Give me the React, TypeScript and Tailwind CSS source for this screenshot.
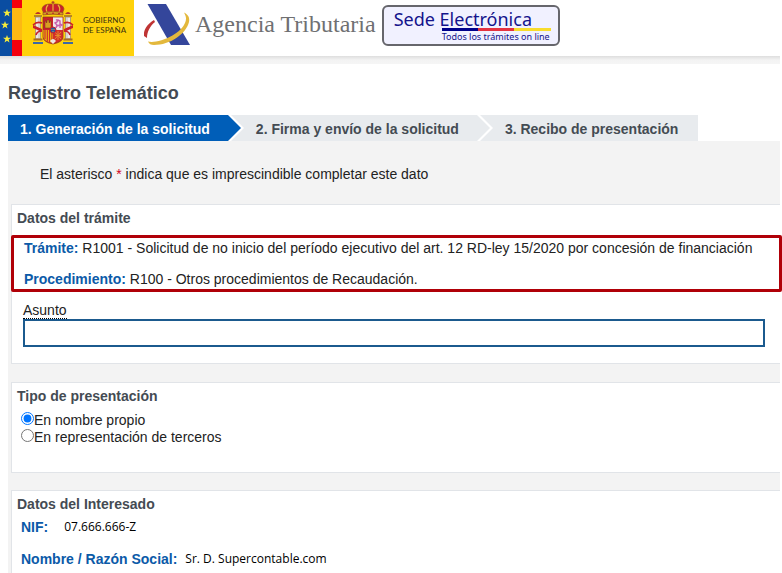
import { useState } from "react";
import type { ReactNode } from "react";

const STEPS = ["1. Generación de la solicitud", "2. Firma y envío de la solicitud", "3. Recibo de presentación"];

const PRESENTATION_TYPES = [
  { id: "propio", label: "En nombre propio" },
  { id: "terceros", label: "En representación de terceros" }
];

function Star({ x, y }: { x: number; y: number }) {
  return (
    <polygon
      transform={`translate(${x} ${y})`}
      points="0,-4 1,-1.2 4,-1.2 1.6,0.6 2.5,3.6 0,1.8 -2.5,3.6 -1.6,0.6 -4,-1.2 -1,-1.2"
      fill="#f7ec3c"
    />
  );
}

function Flags() {
  return (
    <svg width="22" height="56" viewBox="0 0 22 56" aria-hidden="true">
      <rect width="12" height="56" fill="#0a4da2" />
      <rect x="12" width="10" height="56" fill="#f4000d" />
      <rect x="12" y="8" width="10" height="32" fill="#fdb813" />
      <Star x={7} y={13} />
      <Star x={5} y={25} />
      <Star x={7} y={39} />
    </svg>
  );
}

function CoatOfArms() {
  return (
    <svg width="42" height="46" viewBox="0 0 42 46" aria-label="Escudo de España" role="img">
      {/* crown */}
      <path d="M21 1v3M19.5 2.3h3" stroke="#a8352a" strokeWidth="1" />
      <path d="M10 9C11 4 16 4 21 4s10 0 11 5l-2 5H12z" fill="#c9202c" stroke="#9a5a18" strokeWidth=".8" />
      <path d="M21 4v8M16 5c-2 2-2 5-1 7M26 5c2 2 2 5 1 7" stroke="#e9b53a" strokeWidth="1.2" fill="none" />
      <path d="M11 12.500q10-2.500 20 0v2.500q-10-2-20 0z" fill="#d79b28" stroke="#8a3d1b" strokeWidth=".6" />
      <path d="M14 13.7h2M20 13.2h2M26 13.7h2" stroke="#b3202a" />
      {/* pillars */}
      <path d="M3.500 17h5v22h-5zM33.500 17h5v22h-5z" fill="#d9d3cc" stroke="#8d7b76" strokeWidth=".6" />
      <path d="M5 18v20M37 18v20" stroke="#fff" strokeWidth="1" />
      <path d="M2 16h8M32 16h8" stroke="#b68426" strokeWidth="2" />
      <path d="M3 14q3-4 6 0zM33 14q3-4 6 0z" fill="#b9302b" />
      <path d="M1.5 39.5h9M31.5 39.5h9" stroke="#a86c23" strokeWidth="2" />
      <path d="M1 43h10M31 43h10" stroke="#3d69a5" strokeWidth="2" />
      <path d="M1 25l9 4v3l-9-4zM41 25l-9 4v3l9-4z" fill="#c9202c" />
      <path d="M1 25q4-4 9-2M41 25q-4-4-9-2M10 31q-5 0-6 4M32 31q5 0 6 4" stroke="#c9202c" strokeWidth="1.6" fill="none" />
      {/* shield */}
      <path d="M11 17h20v20q0 5-10 7Q11 42 11 37z" fill="#c9202c" stroke="#8a3d1b" strokeWidth=".8" />
      <path d="M21 17.4h9.6V30H21z" fill="#efe6e9" />
      <path d="M13 21v7h6v-7h-1v1.500h-1V20h-2v2.500h-1V21z" fill="#d99e22" stroke="#71351a" strokeWidth=".5" />
      <path d="M24 28l1-3-2-2 2-1 1-2 2 1v3l2 1-2 1v2M24 19.5l2 1.5M28 25l-3 1" stroke="#c95fae" strokeWidth="1.4" fill="none" />
      <path d="M11.4 30H21v13q-9-1.500-9.600-6z" fill="#eeb211" />
      <path d="M13 30v9M15.3 30v11.5M17.6 30v12.5M19.9 30v13" stroke="#c9202c" strokeWidth="1" />
      <path d="M21 30h9.600v7q-.6 4-9.600 6z" fill="#d2302c" />
      <path d="M23 32l6 7M29 32l-6 7M26 31v9M23 35.5h6" stroke="#e6902c" strokeWidth=".9" />
      <path d="M18 41q3-4 6 0l-3 3z" fill="#efe6e0" />
      <circle cx="21" cy="30" r="3" fill="#2858a5" stroke="#c9202c" />
      <path d="M20 29v1M22 29v1M21 31v1" stroke="#efbf28" strokeWidth=".8" />
    </svg>
  );
}

function AgencyMark() {
  return (
    <svg width="48" height="44" viewBox="0 0 48 44" aria-hidden="true">
      <path d="M3.500 2H22l24 41H27z" fill="#34469b" />
      <path d="M10 18C3 22 -1 29 0 34l3 2C3 30 6 24 11 20z" fill="#bf3434" />
      <path
        d="M40 10.500c4 2 6 5 5 9.500-3 12-19 23-35 23-3 0-5-1-6-3.500 2 .5 5 .5 8 0 15-2.500 30-13 30-23 0-2-1-4-2-6z"
        fill="#e3b83c"
      />
    </svg>
  );
}

function SedeElectronica() {
  return (
    <a
      href="#sede"
      className="mt-[5px] ml-1.5 flex h-[41px] w-[178px] flex-col rounded-md border-2 border-[#66666c] bg-[#f1f1ff] pl-2.5 font-['Noto_Sans','Open_Sans',sans-serif] text-[#14148c]"
    >
      <span className="h-[21px] text-lg leading-6 whitespace-nowrap">Sede Electrónica</span>
      <span className="ml-12 flex h-[3px] w-[109px] shrink-0">
        <span className="flex-1 bg-[#00008b]" />
        <span className="flex-1 bg-[#e53340]" />
        <span className="flex-1 bg-[#f8dc2c]" />
      </span>
      <span className="ml-12 text-[9px] leading-3 whitespace-nowrap">Todos los trámites on line</span>
    </a>
  );
}

function Header() {
  return (
    <header className="flex h-14 shrink-0 bg-white">
      <div className="flex h-14 w-[134px] bg-[#ffd20a]">
        <Flags />
        <span className="ml-2.5">
          <CoatOfArms />
        </span>
        <span className="mt-[15px] ml-[9px] font-['Lato',sans-serif] text-[8px] leading-[10px] text-[#3a3310]">
          <span className="block">GOBIERNO</span>
          <span className="block">DE ESPAÑA</span>
        </span>
      </div>
      <span className="mt-0.5 ml-2.5">
        <AgencyMark />
      </span>
      <span className="mt-2 ml-[3px] font-['Liberation_Serif',serif] text-[24px] leading-8 whitespace-nowrap text-[#6f7072]">
        Agencia Tributaria
      </span>
      <SedeElectronica />
    </header>
  );
}

function Steps() {
  return (
    <ol className="flex h-[26px] text-sm leading-[28px] font-bold whitespace-nowrap">
      {STEPS.map((step, index) => (
        <li
          key={step}
          aria-current={index === 0 ? "step" : undefined}
          className={`flex pl-3 ${index === 0 ? "bg-[#005eb8] text-white" : "bg-[#e8ebee] text-[#444b53]"}`}
        >
          {step}
          {index < STEPS.length - 1 ? (
            <svg width="34" height="26" viewBox="0 0 34 26" className="shrink-0" aria-hidden="true">
              <rect x="18" width="16" height="26" fill="#e8ebee" />
              <path d="M18 0h3l13 13-13 13h-3z" fill="#fff" />
              <path d="M0 0h18l13 13-13 13H0z" fill={index === 0 ? "#005eb8" : "#e8ebee"} />
            </svg>
          ) : (
            <span className="w-5" />
          )}
        </li>
      ))}
    </ol>
  );
}

function Panel({ title, className, children }: { title: string; className: string; children: ReactNode }) {
  return (
    <section className={`border-y border-l border-[#e1e4e8] bg-white ${className}`}>
      <h2 className="pt-[3px] pl-[5px] text-sm leading-5 font-bold text-[#444b53]">{title}</h2>
      {children}
    </section>
  );
}

export default function App() {
  const [subject, setSubject] = useState("");
  const [presentation, setPresentation] = useState("propio");

  return (
    <div className="flex min-h-screen flex-col overflow-x-hidden bg-white font-['Liberation_Sans',Arial,sans-serif] text-sm text-[#222]">
      <Header />
      <div className="mr-0.5 h-2 shrink-0 bg-linear-to-b from-[#dedede] via-[#f3f3f3] to-[#f5f5f5]" />

      <main className="mr-0.5 ml-2 flex flex-1 flex-col">
        <h1 className="mt-[17px] mb-2.5 text-lg leading-6 font-bold text-[#444b53]">Registro Telemático</h1>
        <Steps />

        <div className="flex flex-1 flex-col bg-[#f3f3f3] pl-[3px]">
          <p className="pt-[23px] pb-5 pl-[29px] leading-5">
            El asterisco <span className="text-[#d0021b]">*</span> indica que es imprescindible completar este dato
          </p>

          <Panel title="Datos del trámite" className="pb-4">
            <div className="mt-[7px] -mr-0.5 -ml-px rounded-xs border-3 border-[#b00008] pl-2.5">
              <p className="leading-5 whitespace-nowrap">
                <strong className="text-[#0b5aa8]">Trámite:</strong> R1001 - Solicitud de no inicio del período
                ejecutivo del art. 12 RD-ley 15/2020 por concesión de financiación
              </p>
              <p className="mt-[11px] leading-5">
                <strong className="text-[#0b5aa8]">Procedimiento:</strong> R100 - Otros procedimientos de Recaudación.
              </p>
            </div>
            <div className="mt-2.5 mr-[15px] ml-[11px]">
              <label htmlFor="asunto" className="block h-[17px] leading-4">
                <span className="border-b border-dotted border-black">Asunto</span>
              </label>
              <input
                id="asunto"
                type="text"
                value={subject}
                onChange={(event) => setSubject(event.target.value)}
                className="block h-7 w-full border-2 border-[#1b5a8e] bg-white px-2 outline-none"
              />
            </div>
          </Panel>

          <Panel title="Tipo de presentación" className="mt-[18px] pb-[26px]">
            <div role="radiogroup" aria-label="Tipo de presentación" className="mt-1.5 pl-[9px]">
              {PRESENTATION_TYPES.map((type) => (
                <label key={type.id} className="flex h-[17px] leading-[17px]">
                  <input
                    type="radio"
                    name="presentacion"
                    checked={presentation === type.id}
                    onChange={() => setPresentation(type.id)}
                    className="size-[13px] accent-[#0075ff]"
                  />
                  {type.label}
                </label>
              ))}
            </div>
          </Panel>

          <Panel title="Datos del Interesado" className="mt-[17px] flex-1 border-b-0">
            <dl className="mt-[3px] pl-[9px]">
              <div className="flex leading-5">
                <dt className="font-bold text-[#0b5aa8]">NIF:</dt>
                <dd className="ml-4 font-['Open_Sans',sans-serif] text-xs leading-5 text-black">07.666.666-Z</dd>
              </div>
              <div className="mt-3 flex leading-5">
                <dt className="font-bold text-[#0b5aa8]">Nombre / Razón Social:</dt>
                <dd className="ml-2 font-['Open_Sans',sans-serif] text-xs leading-5 text-black">Sr. D. Supercontable.com</dd>
              </div>
            </dl>
          </Panel>
        </div>
      </main>
    </div>
  );
}
